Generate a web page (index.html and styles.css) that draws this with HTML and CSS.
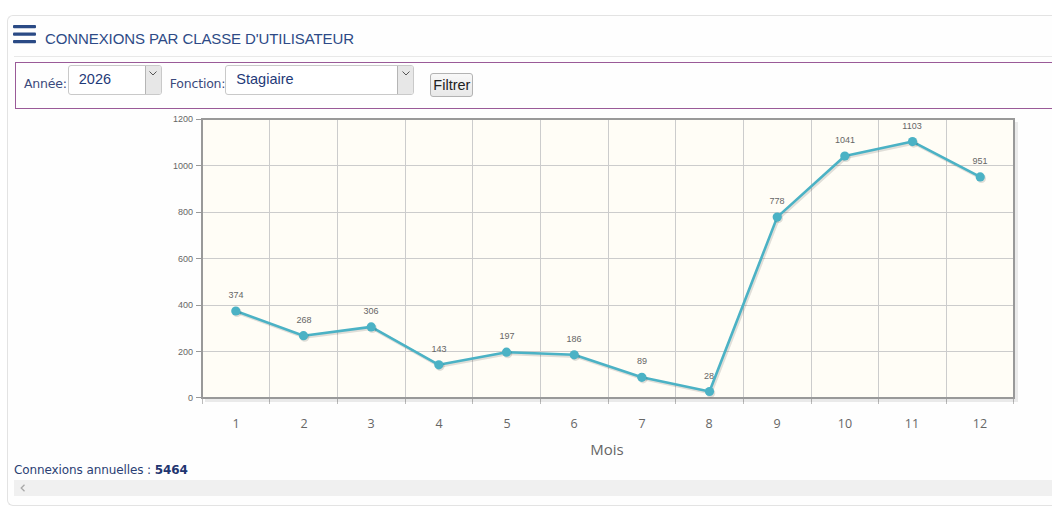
FILE: index.html
```html
<!DOCTYPE html>
<html lang="fr">
<head>
<meta charset="utf-8">
<title>Connexions par classe d'utilisateur</title>
<link rel="stylesheet" href="styles.css">
</head>
<body>
<div class="card">
  <div class="card-header">
    <svg class="menu-icon" width="24" height="20" viewBox="0 0 24 20">
      <rect x="0" y="1" width="23" height="3.2" rx="1" fill="#2a4a85"/>
      <rect x="0" y="8.5" width="23" height="3.2" rx="1" fill="#2a4a85"/>
      <rect x="0" y="16" width="23" height="3.2" rx="1" fill="#2a4a85"/>
    </svg>
    <h1 class="title">CONNEXIONS PAR CLASSE D'UTILISATEUR</h1>
  </div>

  <form class="filters">
    <span class="lbl lbl-year">Année:</span>
    <div class="select sel-year"><span class="sel-text">2026</span><span class="sel-arrow"><svg width="8" height="5" viewBox="0 0 8 5"><path d="M0.5 0.5 L4 4 L7.5 0.5" fill="none" stroke="#555" stroke-width="1"/></svg></span></div>
    <span class="lbl lbl-fn">Fonction:</span>
    <div class="select sel-fn"><span class="sel-text">Stagiaire</span><span class="sel-arrow"><svg width="8" height="5" viewBox="0 0 8 5"><path d="M0.5 0.5 L4 4 L7.5 0.5" fill="none" stroke="#555" stroke-width="1"/></svg></span></div>
    <button type="button" class="btn">Filtrer</button>
  </form>

  <svg class="chart" width="1038" height="354" viewBox="14 109 1038 354">
    <rect x="202" y="119" width="812" height="279" fill="#fffdf6"/>
    <g stroke="#cccccc" stroke-width="1">
      <line x1="202" y1="165.5" x2="1014" y2="165.5"/>
      <line x1="202" y1="212.5" x2="1014" y2="212.5"/>
      <line x1="202" y1="258.5" x2="1014" y2="258.5"/>
      <line x1="202" y1="305.5" x2="1014" y2="305.5"/>
      <line x1="202" y1="351.5" x2="1014" y2="351.5"/>
      <line x1="269.5" y1="119" x2="269.5" y2="398"/>
      <line x1="337.5" y1="119" x2="337.5" y2="398"/>
      <line x1="405.5" y1="119" x2="405.5" y2="398"/>
      <line x1="472.5" y1="119" x2="472.5" y2="398"/>
      <line x1="540.5" y1="119" x2="540.5" y2="398"/>
      <line x1="608.5" y1="119" x2="608.5" y2="398"/>
      <line x1="675.5" y1="119" x2="675.5" y2="398"/>
      <line x1="743.5" y1="119" x2="743.5" y2="398"/>
      <line x1="811.5" y1="119" x2="811.5" y2="398"/>
      <line x1="878.5" y1="119" x2="878.5" y2="398"/>
      <line x1="946.5" y1="119" x2="946.5" y2="398"/>
    </g>
    <!-- x ticks -->
    <g stroke="#bbbbbb" stroke-width="1">
      <line x1="202.5" y1="398" x2="202.5" y2="404"/>
      <line x1="269.5" y1="398" x2="269.5" y2="404"/>
      <line x1="337.5" y1="398" x2="337.5" y2="404"/>
      <line x1="405.5" y1="398" x2="405.5" y2="404"/>
      <line x1="472.5" y1="398" x2="472.5" y2="404"/>
      <line x1="540.5" y1="398" x2="540.5" y2="404"/>
      <line x1="608.5" y1="398" x2="608.5" y2="404"/>
      <line x1="675.5" y1="398" x2="675.5" y2="404"/>
      <line x1="743.5" y1="398" x2="743.5" y2="404"/>
      <line x1="811.5" y1="398" x2="811.5" y2="404"/>
      <line x1="878.5" y1="398" x2="878.5" y2="404"/>
      <line x1="946.5" y1="398" x2="946.5" y2="404"/>
      <line x1="1013.5" y1="398" x2="1013.5" y2="404"/>
    </g>
    <!-- y ticks -->
    <g stroke="#999999" stroke-width="1">
      <line x1="196" y1="119.5" x2="202" y2="119.5"/>
      <line x1="196" y1="165.5" x2="202" y2="165.5"/>
      <line x1="196" y1="212.5" x2="202" y2="212.5"/>
      <line x1="196" y1="258.5" x2="202" y2="258.5"/>
      <line x1="196" y1="305.5" x2="202" y2="305.5"/>
      <line x1="196" y1="351.5" x2="202" y2="351.5"/>
      <line x1="196" y1="397.5" x2="202" y2="397.5"/>
    </g>
    <!-- border shadow -->
    <g stroke="rgba(0,0,0,0.08)" stroke-width="3" fill="none">
      <polyline points="1016.5,122 1016.5,400.5 205,400.5"/>
    </g>
    <rect x="202" y="119" width="812" height="279" fill="none" stroke="#999999" stroke-width="2"/>

    <g class="ylbl" text-anchor="end">
      <text x="193" y="122">1200</text>
      <text x="193" y="168.5">1000</text>
      <text x="193" y="215">800</text>
      <text x="193" y="261.5">600</text>
      <text x="193" y="308">400</text>
      <text x="193" y="354.5">200</text>
      <text x="193" y="401">0</text>
    </g>

    <!-- series shadow -->
    <polyline fill="none" stroke="rgba(0,0,0,0.12)" stroke-width="3" stroke-linejoin="round"
      transform="translate(1.3,1.6)"
      points="235.8,311 303.5,335.7 371.2,326.9 438.8,364.8 506.5,352.2 574.2,354.8 641.8,377.3 709.5,391.5 777.2,217.1 844.8,156 912.5,141.6 980.2,176.9"/>
    <polyline fill="none" stroke="#4bb2c5" stroke-width="2.6" stroke-linejoin="round"
      points="235.8,311 303.5,335.7 371.2,326.9 438.8,364.8 506.5,352.2 574.2,354.8 641.8,377.3 709.5,391.5 777.2,217.1 844.8,156 912.5,141.6 980.2,176.9"/>
    <g fill="rgba(0,0,0,0.12)" transform="translate(1.2,1.5)">
      <circle cx="235.8" cy="311" r="4.6"/><circle cx="303.5" cy="335.7" r="4.6"/><circle cx="371.2" cy="326.9" r="4.6"/>
      <circle cx="438.8" cy="364.8" r="4.6"/><circle cx="506.5" cy="352.2" r="4.6"/><circle cx="574.2" cy="354.8" r="4.6"/>
      <circle cx="641.8" cy="377.3" r="4.6"/><circle cx="709.5" cy="391.5" r="4.6"/><circle cx="777.2" cy="217.1" r="4.6"/>
      <circle cx="844.8" cy="156" r="4.6"/><circle cx="912.5" cy="141.6" r="4.6"/><circle cx="980.2" cy="176.9" r="4.6"/>
    </g>
    <g fill="#4bb2c5">
      <circle cx="235.8" cy="311" r="4.6"/><circle cx="303.5" cy="335.7" r="4.6"/><circle cx="371.2" cy="326.9" r="4.6"/>
      <circle cx="438.8" cy="364.8" r="4.6"/><circle cx="506.5" cy="352.2" r="4.6"/><circle cx="574.2" cy="354.8" r="4.6"/>
      <circle cx="641.8" cy="377.3" r="4.6"/><circle cx="709.5" cy="391.5" r="4.6"/><circle cx="777.2" cy="217.1" r="4.6"/>
      <circle cx="844.8" cy="156" r="4.6"/><circle cx="912.5" cy="141.6" r="4.6"/><circle cx="980.2" cy="176.9" r="4.6"/>
    </g>

    <g class="plbl" text-anchor="middle">
      <text x="236" y="298">374</text>
      <text x="304" y="323">268</text>
      <text x="371" y="314">306</text>
      <text x="439" y="352">143</text>
      <text x="507" y="339">197</text>
      <text x="574" y="342">186</text>
      <text x="642" y="364">89</text>
      <text x="709" y="378.5">28</text>
      <text x="777" y="204">778</text>
      <text x="845" y="143">1041</text>
      <text x="912" y="129">1103</text>
      <text x="980" y="164">951</text>
    </g>

    <g class="xlbl" text-anchor="middle">
      <text x="236" y="428">1</text>
      <text x="304" y="428">2</text>
      <text x="371" y="428">3</text>
      <text x="439" y="428">4</text>
      <text x="507" y="428">5</text>
      <text x="574" y="428">6</text>
      <text x="642" y="428">7</text>
      <text x="709" y="428">8</text>
      <text x="777" y="428">9</text>
      <text x="845" y="428">10</text>
      <text x="912" y="428">11</text>
      <text x="980" y="428">12</text>
    </g>
    <text class="xtitle" x="607" y="455" text-anchor="middle">Mois</text>
  </svg>

  <p class="total">Connexions annuelles : <strong>5464</strong></p>

  <div class="hscroll">
    <svg width="6" height="8" viewBox="0 0 6 8"><path d="M4.5 0.8 L1.2 4 L4.5 7.2" fill="none" stroke="#a8a8a8" stroke-width="1.3"/></svg>
  </div>
</div>
</body>
</html>
```

FILE: styles.css
```css
html, body {
  margin: 0;
  padding: 0;
  background: #ffffff;
  overflow: hidden;
}

body {
  font-family: "DejaVu Sans", sans-serif;
}

.card {
  margin: 15px 0 0 7px;
  border: 1px solid #e3e3e3;
  border-right: none;
  border-radius: 6px 0 0 6px;
  padding: 0 0 9px 6px;
  background: #fefefe;
}

.card-header {
  height: 40px;
  border-bottom: 1px solid #e8e8e8;
  display: flex;
  align-items: flex-start;
}

.menu-icon {
  margin: 8px 0 0 -1px;
  flex: none;
}

.title {
  margin: 14px 0 0 8px;
  font-family: "Liberation Sans", Arial, sans-serif;
  font-weight: normal;
  font-size: 15px;
  line-height: 18px;
  color: #2d4a86;
  letter-spacing: -0.1px;
}

.filters {
  margin: 5px 0 0 1px;
  height: 43px;
  border: 1px solid #9a5a98;
  border-right: none;
  display: flex;
  align-items: flex-start;
  padding: 2px 0 0 8px;
}

.lbl {
  font-family: "DejaVu Sans", sans-serif;
  font-size: 12.5px;
  line-height: 16px;
  color: #3b4a7c;
  margin-top: 11px;
  letter-spacing: -0.2px;
}

.lbl-year {
  margin-right: 1px;
}

.lbl-fn {
  margin-left: 8px;
}

.select {
  height: 28px;
  border: 1px solid #c9c9c9;
  border-radius: 3px;
  background: #ffffff;
  display: flex;
  justify-content: space-between;
  overflow: hidden;
}

.sel-year { width: 92px; }
.sel-fn { width: 187px; }

.sel-text {
  font-family: "Liberation Sans", Arial, sans-serif;
  font-size: 14.5px;
  line-height: 27px;
  color: #1f3a78;
  padding-left: 10px;
}

.sel-arrow {
  width: 16px;
  border-left: 1px solid #b5b5b5;
  background: #e7e7e7;
  display: flex;
  justify-content: center;
  padding-top: 5px;
  box-sizing: border-box;
}

.sel-arrow svg { display: block; }

.btn {
  margin: 8px 0 0 16px;
  height: 24px;
  padding: 0 2px;
  border: 1px solid #b3b3b3;
  border-radius: 3px;
  background: linear-gradient(#f8f8f8, #e8e8e8);
  font-family: "Liberation Sans", Arial, sans-serif;
  font-size: 14.5px;
  color: #222222;
}

.chart {
  display: block;
}

.ylbl text {
  font-family: "Liberation Sans", Arial, sans-serif;
  font-size: 9px;
  fill: #666666;
}

.plbl text {
  font-family: "Liberation Sans", Arial, sans-serif;
  font-size: 9px;
  fill: #666666;
}

.xlbl text {
  font-family: "Open Sans", "DejaVu Sans", sans-serif;
  font-size: 12.5px;
  fill: #666666;
}

.xtitle {
  font-family: "Open Sans", "DejaVu Sans", sans-serif;
  font-size: 15px;
  fill: #666666;
}

.total {
  margin: 0;
  font-family: "DejaVu Sans", sans-serif;
  font-size: 12px;
  line-height: 14px;
  color: #2b3f74;
  letter-spacing: -0.1px;
}

.total strong {
  color: #1f3570;
}

.hscroll {
  margin-top: 3px;
  height: 16px;
  background: #f0f0f0;
  display: flex;
  align-items: center;
  padding-left: 6px;
}

.hscroll svg { display: block; }
```
